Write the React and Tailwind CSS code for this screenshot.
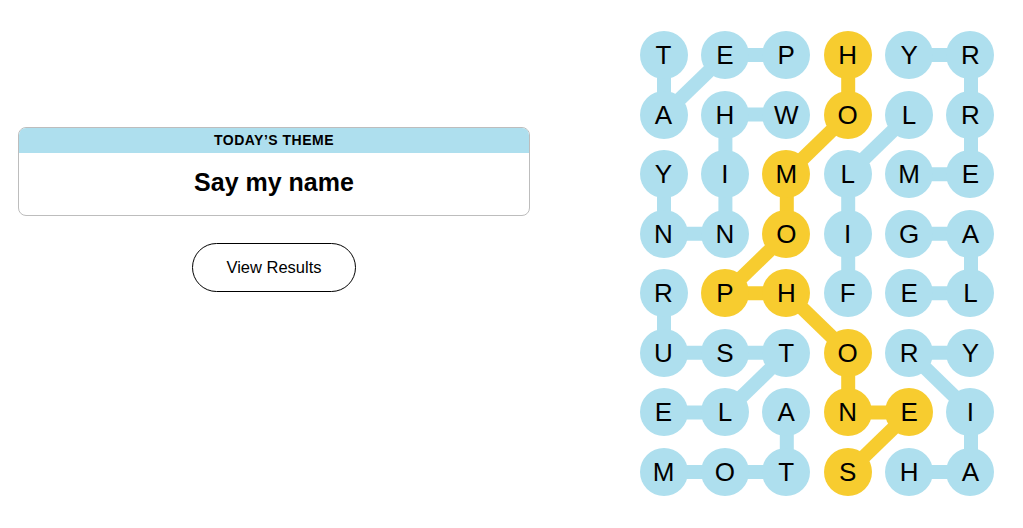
import React from 'react';

const rows = [
  'TEPHYR',
  'AHWOLR',
  'YIMLME',
  'NNOIGA',
  'RPHFEL',
  'USTORY',
  'ELANEI',
  'MOTSHA',
];

// found words, as chains of [row, col]
const words = [
  { cells: [[0, 0], [1, 0], [0, 1], [0, 2]] },
  { cells: [[1, 2], [1, 1], [2, 1], [3, 1], [3, 0], [2, 0]] },
  { cells: [[2, 4], [2, 5], [1, 5], [0, 5], [0, 4]] },
  { cells: [[4, 3], [3, 3], [2, 3], [1, 4]] },
  { cells: [[3, 4], [3, 5], [4, 5], [4, 4]] },
  { cells: [[4, 0], [5, 0], [5, 1], [5, 2], [6, 1], [6, 0]] },
  { cells: [[6, 2], [7, 2], [7, 1], [7, 0]] },
  { cells: [[7, 4], [7, 5], [6, 5], [5, 4], [5, 5]] },
  { cells: [[0, 3], [1, 3], [2, 2], [3, 2], [4, 1], [4, 2], [5, 3], [6, 3], [6, 4], [7, 3]], spangram: true },
];

const COL = 61.4;
const ROW = 59.57;
const R = 24;

const spanSet = new Set(
  words.filter((w) => w.spangram).flatMap((w) => w.cells.map(([r, c]) => `${r}-${c}`))
);

const Board = () => (
  <div className="relative w-[355px] h-[465px]">
    <svg className="absolute inset-0" width="355" height="465">
      {words.map((w, i) =>
        w.cells.slice(1).map(([r, c], j) => {
          const [pr, pc] = w.cells[j];
          return (
            <line
              key={`${i}-${j}`}
              x1={R + pc * COL}
              y1={R + pr * ROW}
              x2={R + c * COL}
              y2={R + r * ROW}
              stroke={w.spangram ? '#f7cc2f' : '#aedfee'}
              strokeWidth="14"
            />
          );
        })
      )}
    </svg>
    <div className="relative grid grid-cols-[repeat(6,48px)] grid-rows-[repeat(8,48px)] gap-x-[13.4px] gap-y-[11.57px]">
      {rows.map((row, r) =>
        row.split('').map((ch, c) => (
          <div
            key={`${r}-${c}`}
            className={`w-12 h-12 rounded-full flex items-center justify-center text-[26px] text-black leading-none ${
              spanSet.has(`${r}-${c}`) ? 'bg-[#f7cc2f]' : 'bg-[#aedfee]'
            }`}
          >
            {ch}
          </div>
        ))
      )}
    </div>
  </div>
);

export default function App() {
  return (
    <div className="w-full h-[528px] bg-white flex font-['Liberation_Sans',Arial,sans-serif] overflow-hidden">
      <div className="ml-[18px] w-[512px] pt-[127px] flex flex-col items-center">
        <div className="w-full rounded-[8px] border border-[#bdbdbd] overflow-hidden">
          <div className="bg-[#aedfee] h-[26px] -mt-px -mx-px flex items-center justify-center">
            <span className="text-[14px] font-bold tracking-[0.5px] text-black">TODAY’S THEME</span>
          </div>
          <div className="h-[62px] flex items-center justify-center pb-[2px]">
            <span className="text-[25px] font-bold text-black">Say my name</span>
          </div>
        </div>
        <button className="mt-[27px] w-[164px] h-[49px] rounded-full border border-black bg-white text-[16.5px] text-black">
          View Results
        </button>
      </div>
      <div className="ml-[109.5px] mt-[31px]">
        <Board />
      </div>
    </div>
  );
}
